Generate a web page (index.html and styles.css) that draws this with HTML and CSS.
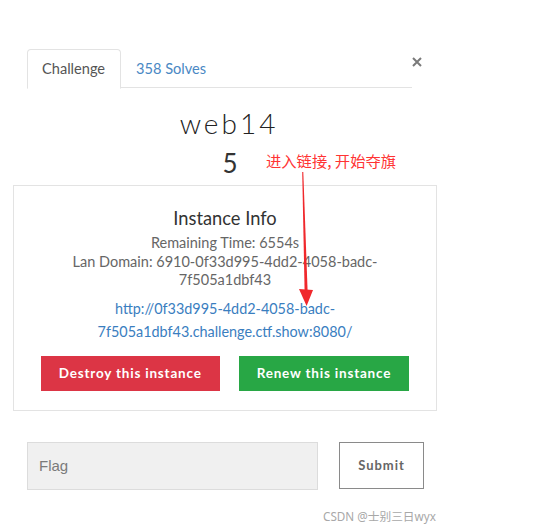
FILE: index.html
```html
<html>
<head>
  <title>web14</title>
  <link rel="stylesheet" href="styles.css">
</head>
<body>
  <div class="modal">
    <div class="cabecera">
      <ul class="pestanas">
        <li class="pestana activa">Challenge</li>
        <li class="pestana"><a href="#">358 Solves</a></li>
      </ul>
      <button class="cerrar" aria-label="Close">
        <svg width="10" height="10" viewBox="0 0 10 10">
          <path d="M1 1 L9 9 M9 1 L1 9" stroke="#7a7a7a" stroke-width="2" fill="none"/>
        </svg>
      </button>
    </div>

    <div class="contenido">
      <h2 class="titulo">web14</h2>
      <h3 class="puntos">5</h3>

      <div class="instancia">
        <h4>Instance Info</h4>
        <p class="datos">Remaining Time: 6554s<br>
          Lan Domain: 6910-0f33d995-4dd2-4058-badc-7f505a1dbf43</p>
        <p class="enlace"><a href="#">http://0f33d995-4dd2-4058-badc-7f505a1dbf43.challenge.ctf.show:8080/</a></p>
        <div class="acciones">
          <button class="btn rojo">Destroy this instance</button>
          <button class="btn verde">Renew this instance</button>
        </div>
      </div>
    </div>

    <form class="bandera" onsubmit="return false">
      <input type="text" placeholder="Flag">
      <button class="enviar">Submit</button>
    </form>

    <div class="marca">CSDN @士别三日wyx</div>
  </div>

  <!-- nota en rojo con flecha hacia el enlace -->
  <div class="nota">进入链接, 开始夺旗</div>
  <svg class="flecha" width="24" height="140" viewBox="0 0 24 140">
    <polygon points="7.2,2 8.3,2 12.6,121 9.6,121" fill="#f0282c"/>
    <polygon points="4,119 18,120 11.6,136" fill="#f0282c"/>
  </svg>
</body>
</html>
```

FILE: styles.css
```css
body {
  margin: 0;
  font-family: Lato, "Noto Sans CJK SC", sans-serif;
  background: #ffffff;
  color: #333;
}

.modal {
  padding-top: 49px;
  width: 536px;
}

/* pestañas */
.cabecera {
  display: flex;
  align-items: flex-start;
  margin-left: 27px;
}

.pestanas {
  display: flex;
  list-style: none;
  margin: 0;
  padding: 0;
  width: 385px;
  height: 38px;
  border-bottom: 1px solid #e3e3e3;
}

.pestana {
  font-size: 14.6px;
  line-height: 38px;
  padding: 0 14px;
  border: 1px solid transparent;
}

.pestana a {
  color: #4a88c4;
  text-decoration: none;
}

.pestana.activa {
  color: #555;
  border-color: #e3e3e3;
  border-bottom-color: #fff;
  border-radius: 4px 4px 0 0;
  background: #fff;
  height: 38px;
  padding-right: 15px;
}

.cerrar {
  border: none;
  background: none;
  padding: 0;
  margin: 8px 0 0 0;
  width: 10px;
  height: 10px;
  cursor: pointer;
}

.cerrar svg {
  display: block;
}

/* titulo y puntos */
.contenido {
  margin-left: 13px;
  width: 424px;
}

.titulo {
  margin: 18px 0 0 0;
  padding-left: 8px;
  text-align: center;
  font-size: 28px;
  font-weight: 300;
  letter-spacing: 3px;
  line-height: 34px;
  color: #222;
}

.puntos {
  margin: 8px 0 0 0;
  padding-left: 10px;
  text-align: center;
  font-size: 26px;
  font-weight: 400;
  line-height: 30px;
  color: #333;
}

/* caja de la instancia */
.instancia {
  margin-top: 7px;
  border: 1px solid #e3e3e3;
  padding: 20px 0 19px 0;
  text-align: center;
}

.instancia h4 {
  margin: 0;
  font-size: 18.3px;
  font-weight: 400;
  line-height: 24px;
  color: #333;
}

.datos {
  margin: 4px auto 0 auto;
  width: 340px;
  font-size: 14.5px;
  line-height: 18.5px;
  color: #666;
}

.enlace {
  margin: 7px auto 0 auto;
  width: 290px;
  font-size: 14.4px;
  line-height: 23px;
}

.enlace a {
  color: #3a7ebf;
  text-decoration: none;
}

.acciones {
  display: flex;
  justify-content: center;
  gap: 19px;
  margin-top: 13px;
}

.btn {
  height: 35px;
  padding: 0 18px;
  border: none;
  font-family: Lato, sans-serif;
  font-size: 13.5px;
  font-weight: 700;
  letter-spacing: 0.8px;
  color: #fff;
  cursor: pointer;
}

.rojo {
  background: #dc3545;
}

.verde {
  background: #28a745;
}

/* formulario de la bandera */
.bandera {
  display: flex;
  gap: 21px;
  margin: 31px 0 0 27px;
}

.bandera input {
  width: 291px;
  height: 48px;
  box-sizing: border-box;
  border: 1px solid #dcdcdc;
  background: #f0f0f0;
  padding: 0 11px;
  font-family: "Liberation Sans", Arial, sans-serif;
  font-size: 15px;
}

.bandera input::placeholder {
  color: #7a7a7a;
}

.enviar {
  width: 85px;
  height: 47px;
  border: 1px solid #8a8a8a;
  background: #fff;
  font-family: Lato, sans-serif;
  font-size: 13px;
  font-weight: 700;
  letter-spacing: 1px;
  color: #666;
  cursor: pointer;
}

.marca {
  margin: 18px 0 0 323px;
  font-family: "Noto Sans", "Noto Sans CJK SC", sans-serif;
  font-size: 11.7px;
  line-height: 16px;
  color: #a8a8a8;
}

/* anotacion */
.nota {
  position: absolute;
  left: 266px;
  top: 150px;
  font-family: "Noto Sans CJK SC", sans-serif;
  font-size: 15.3px;
  line-height: 20px;
  color: #f33;
}

.flecha {
  position: absolute;
  left: 295px;
  top: 170px;
}
```
